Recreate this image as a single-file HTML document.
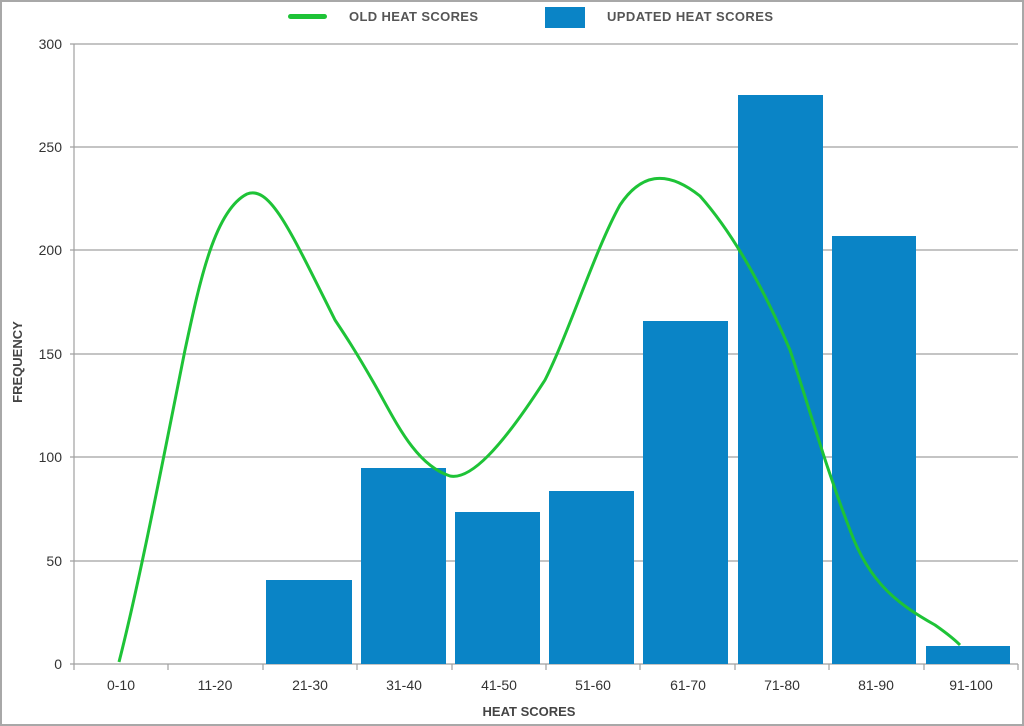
<!DOCTYPE html>
<html><head><style>
html,body{margin:0;padding:0;background:#fff}
svg{display:block;font-family:"Liberation Sans",sans-serif}
</style></head><body>
<svg width="1024" height="726" viewBox="0 0 1024 726">
<rect x="1" y="1" width="1022" height="724" fill="#fff" stroke="#a8a8a8" stroke-width="2"/>
<g stroke="#a0a0a0" stroke-width="1.2">
<line x1="70" y1="44" x2="1018" y2="44"/>
<line x1="70" y1="147" x2="1018" y2="147"/>
<line x1="70" y1="250" x2="1018" y2="250"/>
<line x1="70" y1="354" x2="1018" y2="354"/>
<line x1="70" y1="457" x2="1018" y2="457"/>
<line x1="70" y1="561" x2="1018" y2="561"/>
<line x1="70" y1="664" x2="1018" y2="664"/>
<line x1="74" y1="44" x2="74" y2="670"/>
<line x1="168" y1="664" x2="168" y2="670"/><line x1="263" y1="664" x2="263" y2="670"/>
<line x1="357" y1="664" x2="357" y2="670"/><line x1="452" y1="664" x2="452" y2="670"/>
<line x1="546" y1="664" x2="546" y2="670"/><line x1="640" y1="664" x2="640" y2="670"/>
<line x1="735" y1="664" x2="735" y2="670"/><line x1="829" y1="664" x2="829" y2="670"/>
<line x1="924" y1="664" x2="924" y2="670"/><line x1="1018" y1="664" x2="1018" y2="670"/>
</g>
<g fill="#0a84c6">
<rect x="266" y="580" width="86" height="84"/>
<rect x="361" y="468" width="85" height="196"/>
<rect x="455" y="512" width="85" height="152"/>
<rect x="549" y="491" width="85" height="173"/>
<rect x="643" y="321" width="85" height="343"/>
<rect x="738" y="95" width="85" height="569"/>
<rect x="832" y="236" width="84" height="428"/>
<rect x="926" y="646" width="84" height="18"/>
</g>
<path d="M119,662 C140,580 165,450 185,350 C200,280 215,210 247,194 C270,185 290,230 335,320 C345,335 355,350 375,385 C395,420 415,465 450,476 C470,480 500,450 545,380 C570,330 595,250 620,205 C640,175 665,168 700,196 C730,230 760,280 790,350 C810,410 825,465 850,530 C870,585 900,605 935,625 C945,632 955,640 960,645" fill="none" stroke="#1ec337" stroke-width="3"/>
<g font-size="14" fill="#333" text-anchor="end">
<text x="62" y="49">300</text><text x="62" y="152">250</text><text x="62" y="255">200</text>
<text x="62" y="359">150</text><text x="62" y="462">100</text><text x="62" y="566">50</text><text x="62" y="669">0</text>
</g>
<g font-size="14" fill="#333" text-anchor="middle">
<text x="121" y="690">0-10</text><text x="215" y="690">11-20</text><text x="310" y="690">21-30</text>
<text x="404" y="690">31-40</text><text x="499" y="690">41-50</text><text x="593" y="690">51-60</text>
<text x="688" y="690">61-70</text><text x="782" y="690">71-80</text><text x="876" y="690">81-90</text><text x="971" y="690">91-100</text>
</g>
<text x="529" y="716" font-size="13" font-weight="bold" fill="#444" text-anchor="middle">HEAT SCORES</text>
<text transform="translate(22,362) rotate(-90)" font-size="13" font-weight="bold" fill="#444" text-anchor="middle">FREQUENCY</text>
<rect x="288" y="14" width="39" height="5" rx="2.5" fill="#1ec337"/>
<text x="349" y="21" font-size="13" font-weight="bold" fill="#555" textLength="129">OLD HEAT SCORES</text>
<rect x="545" y="7" width="40" height="21" fill="#0a84c6"/>
<text x="607" y="21" font-size="13" font-weight="bold" fill="#555" textLength="166">UPDATED HEAT SCORES</text>
</svg>
</body></html>
